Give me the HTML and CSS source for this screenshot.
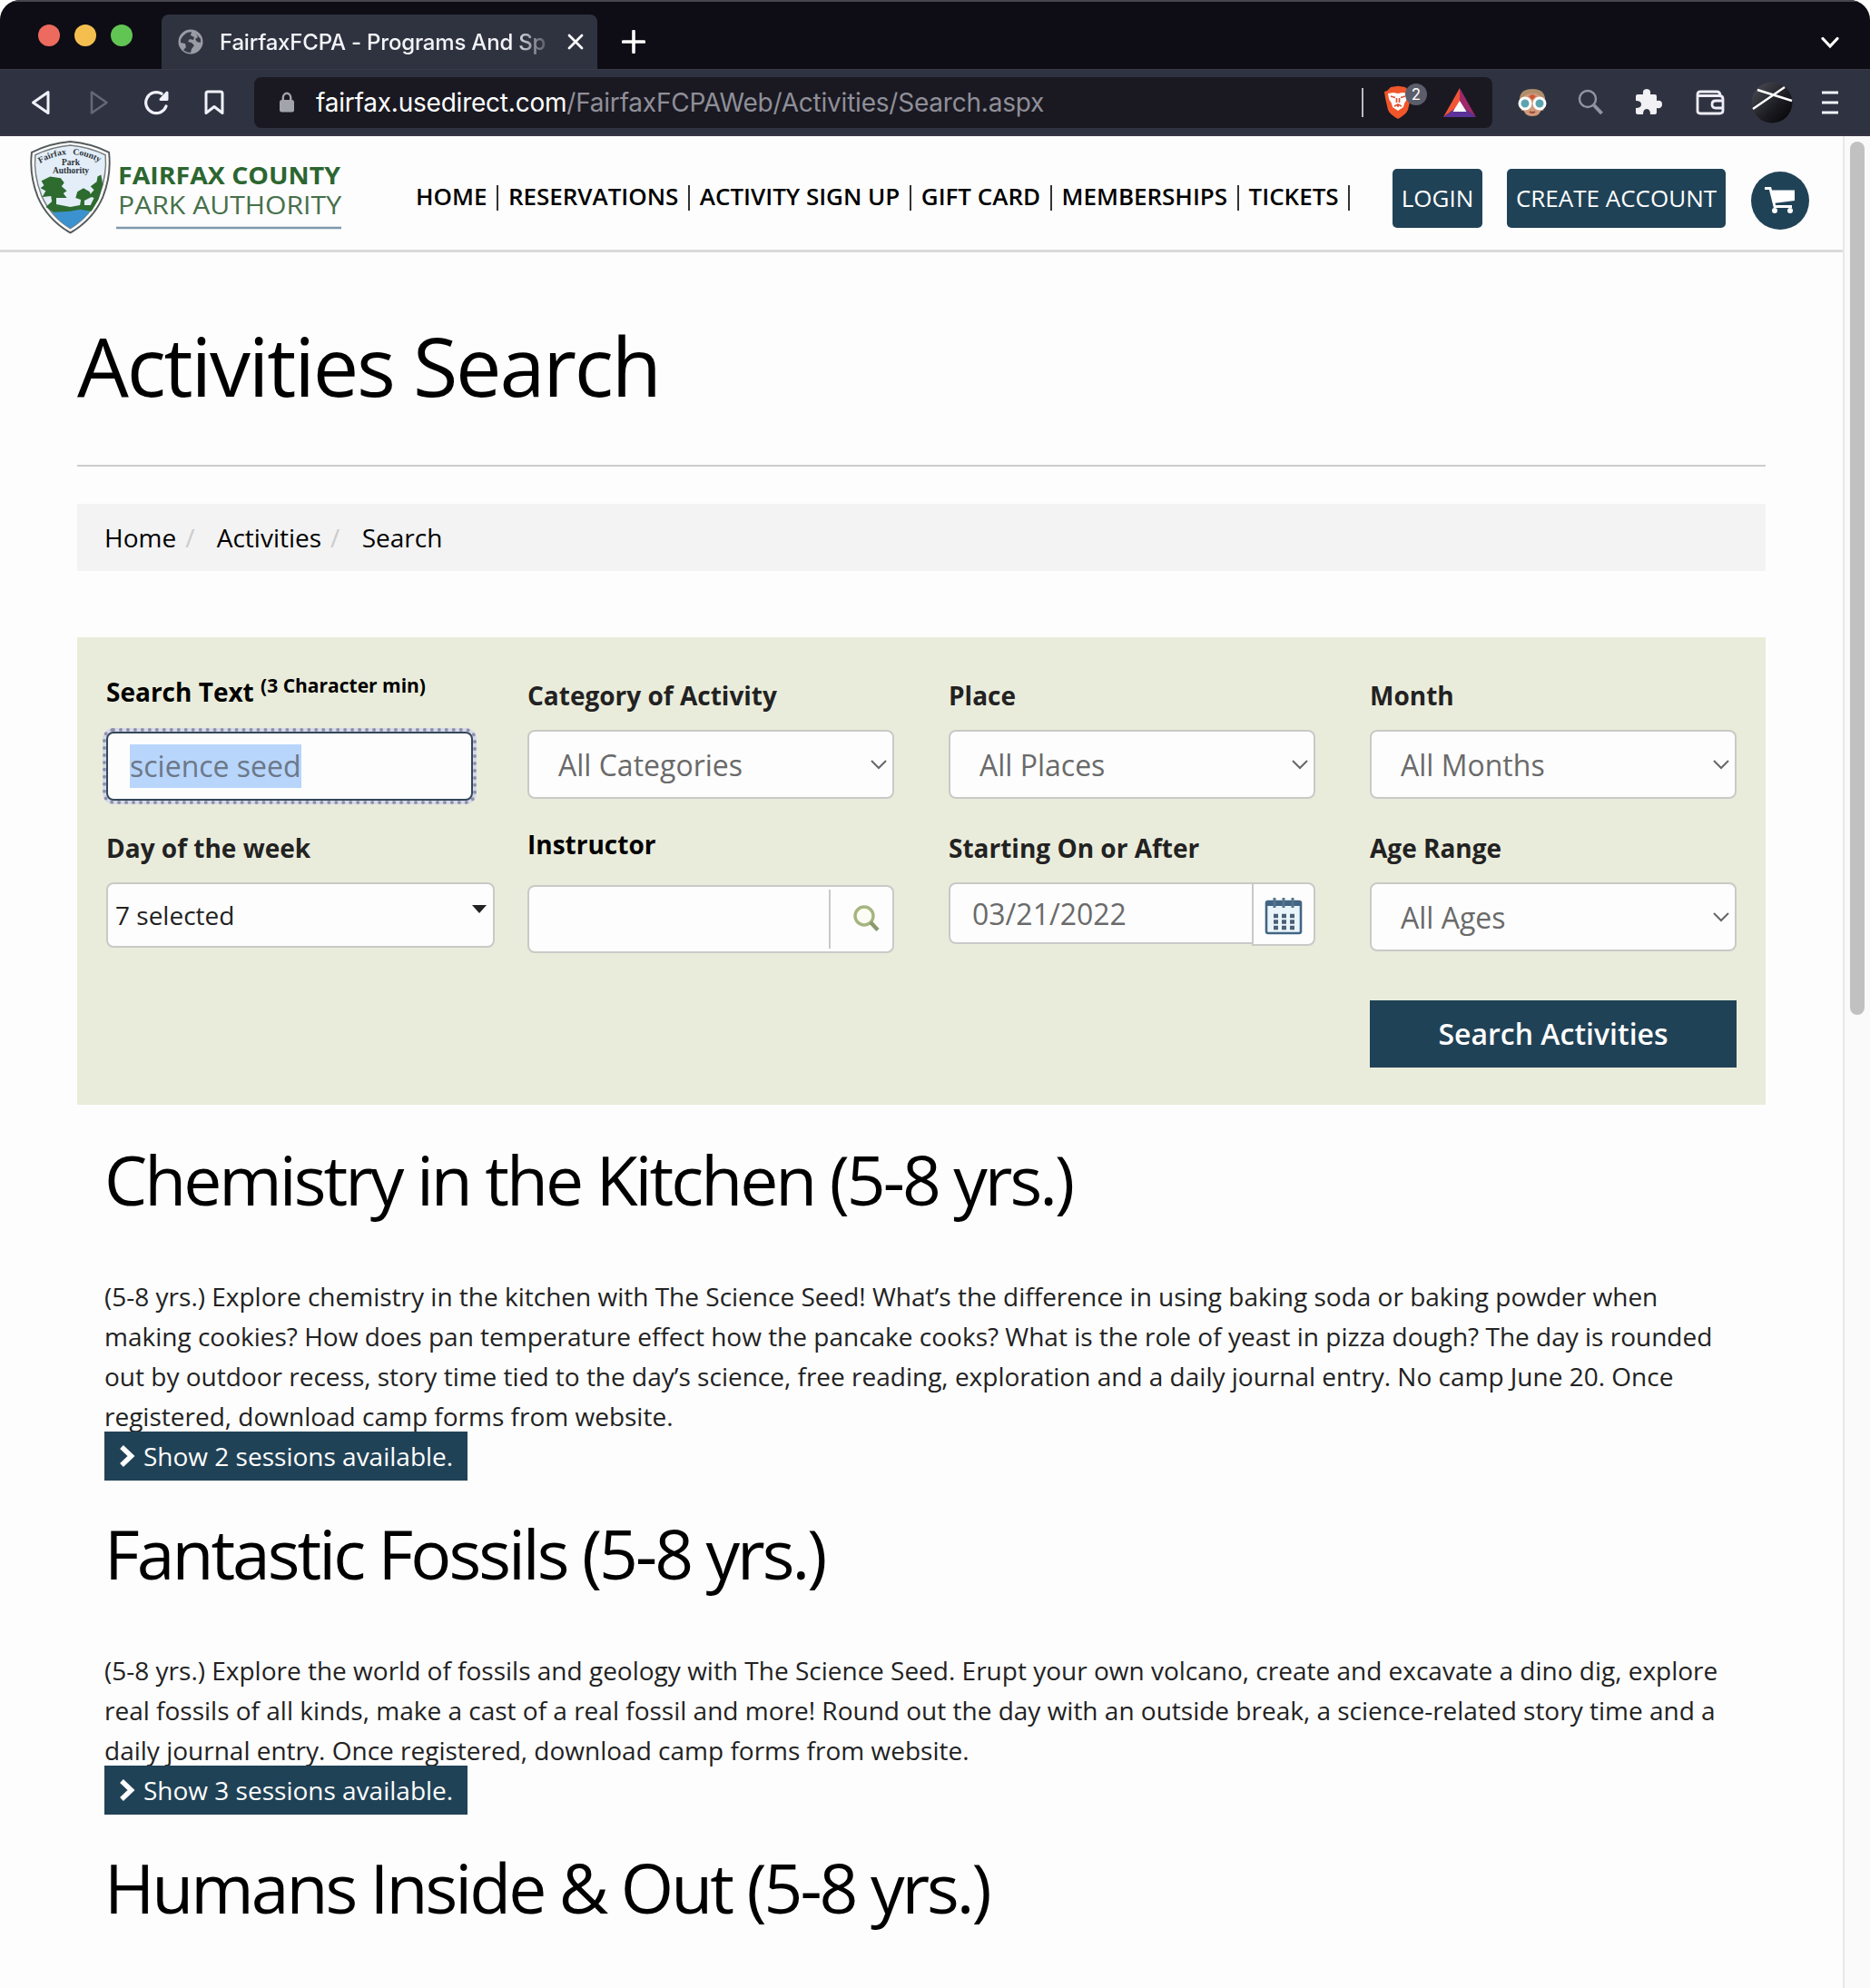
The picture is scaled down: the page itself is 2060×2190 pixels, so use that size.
FILE: index.html
```html
<!DOCTYPE html>
<html lang="en">
<head>
<meta charset="utf-8">
<title>FairfaxFCPA - Programs And Sports</title>
<link rel="stylesheet" href="styles.css">
</head>
<body>
<div class="window">
  <div class="tabstrip">
    <div class="lights"><i class="red"></i><i class="yellow"></i><i class="green"></i></div>
    <div class="tab">
      <svg class="globe" width="28" height="28" viewBox="0 0 28 28"><circle cx="14" cy="14" r="13.500" fill="#9a9ca5"/><path d="M3 12Q5 7 10 4L15 3L14 7L18 9L17 12L13 11L11 14L15 15L18 18L15 22L14 26Q9 26 6 23L9 20L8 16L3 15Z M20 5L25 11L25 15L21 14L19 11L22 9Z" fill="#363a47"/></svg>
      <span class="tab-title">FairfaxFCPA - Programs And Sp</span>
      <svg class="close" width="18" height="18" viewBox="0 0 18 18"><path d="M2 2L16 16M16 2L2 16" stroke="#fff" stroke-width="2.800" stroke-linecap="round"/></svg>
    </div>
    <svg class="plus" width="26" height="26" viewBox="0 0 26 26"><path d="M13 1.500V24.500M1.500 13H24.500" stroke="#fff" stroke-width="3.600" stroke-linecap="round"/></svg>
    <svg class="chev" width="20" height="14" viewBox="0 0 20 14"><path d="M2 2.500L10 11L18 2.500" fill="none" stroke="#fff" stroke-width="3.200" stroke-linecap="round"/></svg>
  </div>
  <div class="toolbar">
    <svg class="back" width="22" height="28" viewBox="0 0 22 28"><path d="M19 2.500V25.500L2.500 14Z" fill="none" stroke="#f0f1fa" stroke-width="3" stroke-linejoin="round"/></svg>
    <svg class="fwd" width="22" height="28" viewBox="0 0 22 28"><path d="M3 2.500V25.500L19.500 14Z" fill="none" stroke="#646876" stroke-width="2.600" stroke-linejoin="round"/></svg>
    <svg class="reload" width="30" height="28" viewBox="0 0 30 28"><path d="M20 4.200A11.500 11.500 0 1 0 25 18" fill="none" stroke="#f0f1fa" stroke-width="3.200" stroke-linecap="round"/><path d="M26 3V10.500H19Z" fill="#f0f1fa" stroke="#f0f1fa" stroke-width="3" stroke-linejoin="round"/></svg>
    <svg class="mark" width="22" height="28" viewBox="0 0 22 28"><path d="M2 4Q2 2 4 2H18Q20 2 20 4V25.500L11 18.500L2 25.500Z" fill="none" stroke="#f0f1fa" stroke-width="3" stroke-linejoin="round"/></svg>
    <div class="urlbar">
      <svg class="lock" width="18" height="24" viewBox="0 0 18 24"><rect x="1" y="9" width="16" height="13.500" rx="2.500" fill="#a3a3ab"/><path d="M4.800 10V6.500A4.200 4.700 0 0 1 13.200 6.500V10" fill="none" stroke="#a3a3ab" stroke-width="2.400"/></svg>
      <div class="url"><b>fairfax.usedirect.com</b>/FairfaxFCPAWeb/Activities/Search.aspx</div>
      <i class="bar"></i>
      <div class="brave">
        <svg width="32" height="38" viewBox="0 0 32 38"><path d="M8 2L16 .8L24 2L28 6L31 7L30 14L27 27Q25 32 16 37Q7 32 5 27L2 14L1 7L4 6Z" fill="#f0562a"/><path d="M5 9L11 8L16 9L21 8L27 9L26 15L23 20L22 24L16 28L10 24L9 20L6 15Z" fill="#fff"/><path d="M8 12L13 13.500M24 12L19 13.500M14.500 14V19M17.500 14V19M12 23L16 21L20 23M16 21V24" stroke="#d9522f" stroke-width="1.700" fill="none"/></svg>
        <span class="count">2</span>
      </div>
      <svg class="bat" width="36" height="32" viewBox="0 0 36 32"><path d="M18 0L0 32L18 19Z" fill="#f05535"/><path d="M18 0L36 32L18 19Z" fill="#9e2a6a"/><path d="M0 32H36L18 19Z" fill="#5b3299"/><path d="M18 14L25.500 26H10.500Z" fill="#fff"/></svg>
    </div>
    <svg class="face" width="32" height="32" viewBox="0 0 32 32"><path d="M2 17Q0 1 16 1Q32 1 30 17L28 25H4Z" fill="#b08e6c"/><path d="M5 15Q5 6 16 6Q27 6 27 15V21Q25 31 16 31Q7 31 5 21Z" fill="#d29a79"/><path d="M12 9L16 7L20 9L16 13Z" fill="#cd5539"/><circle cx="8" cy="17" r="6" fill="#5ca3b0" stroke="#fff" stroke-width="3"/><circle cx="24" cy="17" r="6" fill="#5ca3b0" stroke="#fff" stroke-width="3"/><path d="M13 26Q16 28 19 26" stroke="#9b4b43" stroke-width="2" fill="none"/></svg>
    <svg class="mag" width="29" height="30" viewBox="0 0 29 30"><circle cx="11" cy="11" r="9" fill="none" stroke="#9295a0" stroke-width="2.400"/><path d="M18 18L26.500 27" stroke="#9295a0" stroke-width="4"/></svg>
    <svg class="puzzle" width="30" height="30" viewBox="0 0 30 30"><path d="M3 6H9Q8 0 13 0Q18 0 17 6H22Q24 6 24 8V13Q30 12 30 17Q30 22 24 21V26Q24 28 22 28H17Q17 22 13 22Q9 22 9 28H3Q1 28 1 26V21Q7 21 7 17Q7 13 1 13V8Q1 6 3 6Z" fill="#f0f0f5"/></svg>
    <svg class="wallet" width="32" height="28" viewBox="0 0 32 28"><path d="M2 6V23Q2 26 5 26H26Q30 26 30 23V10Q30 6.500 26 6.500H2V5Q2 2 5 2H23Q27 2 27 6.500M30 12H22Q18 12 18 16Q18 20 22 20H30" fill="none" stroke="#eeedf7" stroke-width="2.800"/></svg>
    <svg class="avatar" width="46" height="46" viewBox="0 0 46 46"><defs><linearGradient id="g" x1="0" y1="0" x2="1" y2="1"><stop offset="0" stop-color="#50505a"/><stop offset=".6" stop-color="#1a1a20"/><stop offset="1" stop-color="#020205"/></linearGradient></defs><circle cx="23" cy="23" r="22.500" fill="url(#g)"/><path d="M7 9L45 21M2 30L37 6" stroke="#fff" stroke-width="2.400"/></svg>
    <svg class="menu" width="18" height="26" viewBox="0 0 18 26"><path d="M0 2H18M0 13H18M0 24H18" stroke="#f0f3ff" stroke-width="3"/></svg>
  </div>
  <div class="viewport">
    <div class="page">
      <header class="site-header">
        <svg class="logo" width="350" height="104" viewBox="0 0 350 104">
          <defs><path id="arc-l" d="M11 25Q26 16 43 15"/><path id="arc-r" d="M47 15Q64 16 80 26"/></defs>
          <g transform="scale(.967 .985)">
          <path d="M46 1Q22 3 2 13Q-1 38 9 63Q20 88 46 103Q72 88 83 63Q93 38 90 13Q70 3 46 1Z" fill="#fff" stroke="#555b5d" stroke-width="2"/>
          <path d="M46 5Q24 7 6 16Q4 38 13 61Q23 84 46 98Q69 84 79 61Q88 38 86 16Q68 7 46 5Z" fill="#e3eef8" stroke="#777d7e" stroke-width="1.500"/>
          <path d="M24 78Q46 73 70 77Q60 90 46 98Q32 90 24 78Z" fill="#3c92cf"/>
          <path d="M18 74L25 68L24 62L14 63L18 56L12 53L16 50L13 45L23 40L35 42L39 47L36 51L42 56L38 59L42 64L30 64L30 71L46 74L57 72L58 66L52 64L54 57L61 53L68 57L70 63L62 67V72L69 72L73 64L67 62L73 55L69 51L76 46L77 40L81 38L83 49L78 66L70 79L57 77L46 79L27 80Z" fill="#2e6b2f"/>
          </g>
          <text class="shield-a"><textPath href="#arc-l" textLength="31" lengthAdjust="spacingAndGlyphs">Fairfax</textPath></text>
          <text class="shield-a"><textPath href="#arc-r" textLength="31" lengthAdjust="spacingAndGlyphs">County</textPath></text>
          <text x="45" y="27" class="shield-a" text-anchor="middle">Park</text>
          <text x="45" y="36" class="shield-a" text-anchor="middle">Authority</text>
          <text x="97" y="48" class="logo-bold" textLength="245" lengthAdjust="spacingAndGlyphs">FAIRFAX COUNTY</text>
          <text x="97" y="81" class="logo-thin" textLength="246" lengthAdjust="spacingAndGlyphs">PARK AUTHORITY</text>
          <path d="M95 96H343" stroke="#7d99ab" stroke-width="2.500"/>
        </svg>
        <nav class="nav"><a>HOME</a><i></i><a>RESERVATIONS</a><i></i><a>ACTIVITY SIGN UP</a><i></i><a>GIFT CARD</a><i></i><a>MEMBERSHIPS</a><i></i><a>TICKETS</a><i></i></nav>
        <a class="btn login">LOGIN</a>
        <a class="btn create">CREATE ACCOUNT</a>
        <a class="cart"><svg width="36" height="30" viewBox="0 0 36 30"><path d="M1 1.500H7L12 21.500H31" fill="none" stroke="#fff" stroke-width="2.800"/><path d="M8 3.500H34V15L10.500 18Z" fill="#fff"/><circle cx="12" cy="26" r="3" fill="#fff"/><circle cx="29" cy="26" r="3" fill="#fff"/></svg></a>
      </header>
      <main>
        <h1>Activities Search</h1>
        <div class="rule"></div>
        <ol class="crumbs"><li>Home</li><li class="sl">/</li><li>Activities</li><li class="sl">/</li><li>Search</li></ol>
        <section class="filters">
          <div class="field up"><label class="dark">Search Text <small>(3 Character min)</small></label><div class="box focus"><mark>science seed</mark></div></div>
          <div class="field"><label>Category of Activity</label><div class="box select">All Categories<svg width="18" height="12" viewBox="0 0 18 12"><path d="M1 2L9 10L17 2" fill="none" stroke="#666" stroke-width="2"/></svg></div></div>
          <div class="field"><label>Place</label><div class="box select">All Places<svg width="18" height="12" viewBox="0 0 18 12"><path d="M1 2L9 10L17 2" fill="none" stroke="#666" stroke-width="2"/></svg></div></div>
          <div class="field"><label>Month</label><div class="box select">All Months<svg width="18" height="12" viewBox="0 0 18 12"><path d="M1 2L9 10L17 2" fill="none" stroke="#666" stroke-width="2"/></svg></div></div>
          <div class="field"><label>Day of the week</label><div class="box days">7 selected<svg width="16" height="9" viewBox="0 0 16 9"><path d="M0 0H16L8 9Z" fill="#222"/></svg></div></div>
          <div class="field up"><label class="dark">Instructor</label><div class="box instructor"><span class="lookup"><svg width="30" height="30" viewBox="0 0 30 30"><circle cx="13" cy="12" r="10" fill="#fbfdf4" stroke="#a5b580" stroke-width="3.400"/><path d="M20 19L28 27.500" stroke="#8a9a6c" stroke-width="4.400"/></svg></span></div></div>
          <div class="field"><label>Starting On or After</label><div class="date"><div class="box date-text">03/21/2022</div><div class="box date-icon"><svg width="42" height="42" viewBox="0 0 42 42"><rect x="2" y="5" width="38" height="35" rx="2" fill="#eaf5fb" stroke="#426583" stroke-width="2.600"/><path d="M2 8H40" stroke="#426583" stroke-width="4"/><path d="M11 1V12M21 1V12M31 1V12" stroke="#54758f" stroke-width="3"/><path d="M10 21H33M10 27.500H33M10 34H33" stroke="#4b6075" stroke-width="4.600" stroke-dasharray="5 4"/></svg></div></div></div>
          <div class="field"><label>Age Range</label><div class="box select">All Ages<svg width="18" height="12" viewBox="0 0 18 12"><path d="M1 2L9 10L17 2" fill="none" stroke="#666" stroke-width="2"/></svg></div></div>
          <a class="submit">Search Activities</a>
        </section>
        <article><h2>Chemistry in the Kitchen (5-8 yrs.)</h2>
          <p>(5-8 yrs.) Explore chemistry in the kitchen with The Science Seed! What’s the difference in using baking soda or baking powder when<br>making cookies? How does pan temperature effect how the pancake cooks? What is the role of yeast in pizza dough? The day is rounded<br>out by outdoor recess, story time tied to the day’s science, free reading, exploration and a daily journal entry. No camp June 20. Once<br>registered, download camp forms from website.</p>
          <a class="show"><svg width="18" height="26" viewBox="0 0 18 26"><path d="M3 3L13.500 13L3 23" fill="none" stroke="#fff" stroke-width="5.500"/></svg>Show 2 sessions available.</a></article>
        <article><h2>Fantastic Fossils (5-8 yrs.)</h2>
          <p>(5-8 yrs.) Explore the world of fossils and geology with The Science Seed. Erupt your own volcano, create and excavate a dino dig, explore<br>real fossils of all kinds, make a cast of a real fossil and more! Round out the day with an outside break, a science-related story time and a<br>daily journal entry. Once registered, download camp forms from website.</p>
          <a class="show"><svg width="18" height="26" viewBox="0 0 18 26"><path d="M3 3L13.500 13L3 23" fill="none" stroke="#fff" stroke-width="5.500"/></svg>Show 3 sessions available.</a></article>
        <article><h2>Humans Inside &amp; Out (5-8 yrs.)</h2></article>
      </main>
    </div>
    <div class="scrollbar"><div class="thumb"></div></div>
  </div>
</div>
</body>
</html>
```
FILE: styles.css
```css
* { box-sizing: border-box; }
body { margin: 0; width: 2060px; height: 2190px; overflow: hidden; background: #fff; font-family: "Open Sans", "Noto Sans", sans-serif; }
svg { display: block; flex: none; }
.window { width: 2060px; height: 2190px; overflow: hidden; border-radius: 22px 22px 0 0; background: #fdfdfd; }
.tabstrip { display: flex; height: 76px; background: #0e0d15; border-top: 2px solid #46464e; font-family: Inter, sans-serif; }
.lights { display: flex; gap: 16px; padding: 25px 0 0 42px; width: 178px; }
.lights i { width: 24px; height: 24px; border-radius: 50%; }
.red { background: #ed6a5e; }
.yellow { background: #f5bf4f; }
.green { background: #61c554; }
.tab { display: flex; align-items: center; width: 480px; margin-top: 14px; padding-left: 18px; border-radius: 8px 8px 0 0; background: #2f3340; }
.tab-title { width: 366px; margin-left: 18px; white-space: nowrap; font-size: 24px; font-weight: 500; letter-spacing: -.2px; color: #f3f4f8; -webkit-mask-image: linear-gradient(90deg, #000 88%, transparent 101%); mask-image: linear-gradient(90deg, #000 88%, transparent 101%); }
.close { margin-left: 17px; }
.plus { margin: 31px 0 0 27px; }
.chev { margin: 38px 34px 0 auto; }
.toolbar { display: flex; align-items: center; height: 74px; background: #2f3341; border-top: 1px solid #3b3b48; border-bottom: 2px solid #3a3648; }
.back { margin-left: 34px; }
.fwd { margin-left: 42px; }
.reload { margin-left: 38px; }
.mark { margin-left: 37px; }
.urlbar { display: flex; align-items: center; width: 1364px; height: 56px; margin-left: 33px; border-radius: 8px; background: #1a1922; font-family: Inter, sans-serif; }
.lock { margin-left: 27px; }
.url { width: 1152px; margin-left: 23px; white-space: nowrap; font-size: 28px; letter-spacing: -.22px; color: #8f8f98; }
.url b { font-weight: 400; color: #fff; }
.bar { width: 2px; height: 32px; background: #b9b9c0; }
.brave { display: flex; position: relative; margin-left: 22px; }
.count { position: absolute; left: 24px; top: -2px; width: 24px; height: 24px; border-radius: 50%; background: #5b5d6a; color: #fff; font-size: 17px; line-height: 24px; text-align: center; }
.bat { margin-left: 34px; }
.face { margin-left: 28px; }
.mag { margin-left: 34px; }
.puzzle { margin-left: 34px; }
.wallet { margin-left: 37px; }
.avatar { margin-left: 29px; }
.menu { margin-left: 32px; }
.viewport { display: flex; height: 2040px; }
.page { width: 2030px; background: #fdfdfd; }
.scrollbar { width: 30px; padding: 6px 0 0 6px; border-left: 2px solid #e8e8e8; background: #fafafa; }
.thumb { width: 16px; height: 962px; border-radius: 8px; background: #c1c1c1; }
.site-header { display: flex; height: 128px; border-bottom: 3px solid #dadada; }
.logo { margin: 5px 0 0 33px; }
.shield-a { font: bold 9.500px "Liberation Serif", serif; fill: #2c3338; }
.logo-bold { font: 700 26px "Open Sans", sans-serif; fill: #2c6630; }
.logo-thin { font: 400 28px "Open Sans", sans-serif; fill: #46704a; }
.nav { display: flex; align-items: center; width: 1076px; height: 44px; margin: 44px 0 0 75px; font-size: 26px; font-weight: 600; letter-spacing: -.02px; color: #000; white-space: nowrap; }
.nav i { width: 2px; height: 28px; margin: 3px 10.75px 0; background: #333; }
.btn { height: 65px; margin-top: 36px; border-radius: 5px; background: #204256; color: #fff; font-size: 26px; line-height: 65px; text-align: center; white-space: nowrap; }
.login { width: 99px; }
.create { width: 241px; margin-left: 27px; }
.cart { display: flex; align-items: center; justify-content: center; width: 64px; height: 64px; margin: 39px 0 0 28px; border-radius: 50%; background: #204256; }
main { padding: 74px 85px 0 85px; }
h1, h2 { margin: 0; font-weight: 400; color: #000; white-space: nowrap; }
h1 { font-size: 90px; line-height: 100px; letter-spacing: -2.2px; }
.rule { height: 2px; margin-top: 60px; background: #ccc; }
.crumbs { display: flex; height: 74px; margin: 41px 0 0; padding: 0 0 0 30px; list-style: none; background: #f3f3f3; font-size: 28px; line-height: 74px; color: #000; }
.crumbs .sl { width: 44.6px; padding-left: 10px; color: #ccc; }
.filters { display: grid; grid-template-columns: repeat(4, 404px); grid-template-rows: 168px 187px 74px; column-gap: 60px; height: 515px; margin-top: 73px; padding: 45px 32px 0; background: #eaecdb; }
.up { margin-top: -4px; }
label { display: block; height: 57px; font-size: 28px; font-weight: 700; line-height: 38px; color: #222; white-space: nowrap; }
label.dark { color: #000; }
small { position: relative; top: -10px; font-size: 21px; line-height: 1; }
.box { display: flex; align-items: center; height: 76px; border: 2px solid #c9c9c7; border-radius: 8px; background: #fdfdfd; color: #6a6a6a; font-size: 32px; white-space: nowrap; }
.focus { height: 76px; margin-top: 6px; padding-left: 24px; border-color: #33475a; outline: 4px dotted #8f90ac; box-shadow: 0 0 0 4px #d5dae6; }
.focus mark { height: 48px; margin-bottom: 1px; background: #b8d5fb; color: #6b7888; line-height: 48px; }
.select { justify-content: space-between; padding: 0 6px 0 32px; }
.days { width: 428px; height: 72px; padding: 0 7px 0 8px; justify-content: space-between; color: #222; font-size: 28px; }
.days svg { margin-bottom: 13px; }
.instructor { height: 75px; margin-top: 7px; justify-content: flex-end; }
.lookup { display: flex; align-items: center; width: 70px; height: 65px; padding: 0 0 1px 24px; border-left: 2px solid #c9c9c7; }
.date { display: flex; align-items: flex-start; }
.date-text { width: 334px; height: 68px; padding: 1px 0 0 24px; border-right: 0; border-radius: 8px 0 0 8px; }
.date-icon { width: 70px; height: 70px; padding: 3px 0 0 12px; border-radius: 0 8px 8px 0; }
.submit { grid-column: 4; height: 74px; background: #204256; color: #fff; font-size: 32px; font-weight: 600; line-height: 74px; text-align: center; }
article { padding: 37px 0 0 30px; }
article + article { padding-top: 35px; }
h2 { font-size: 75px; line-height: 90px; letter-spacing: -3px; }
p { margin: 62px 0 0; font-size: 28px; line-height: 44px; color: #222; white-space: nowrap; }
.show { display: flex; align-items: center; position: relative; width: 400px; height: 54px; margin-top: -5px; padding-left: 16px; gap: 9px; background: #204256; color: #fff; font-size: 28px; white-space: nowrap; }
```
